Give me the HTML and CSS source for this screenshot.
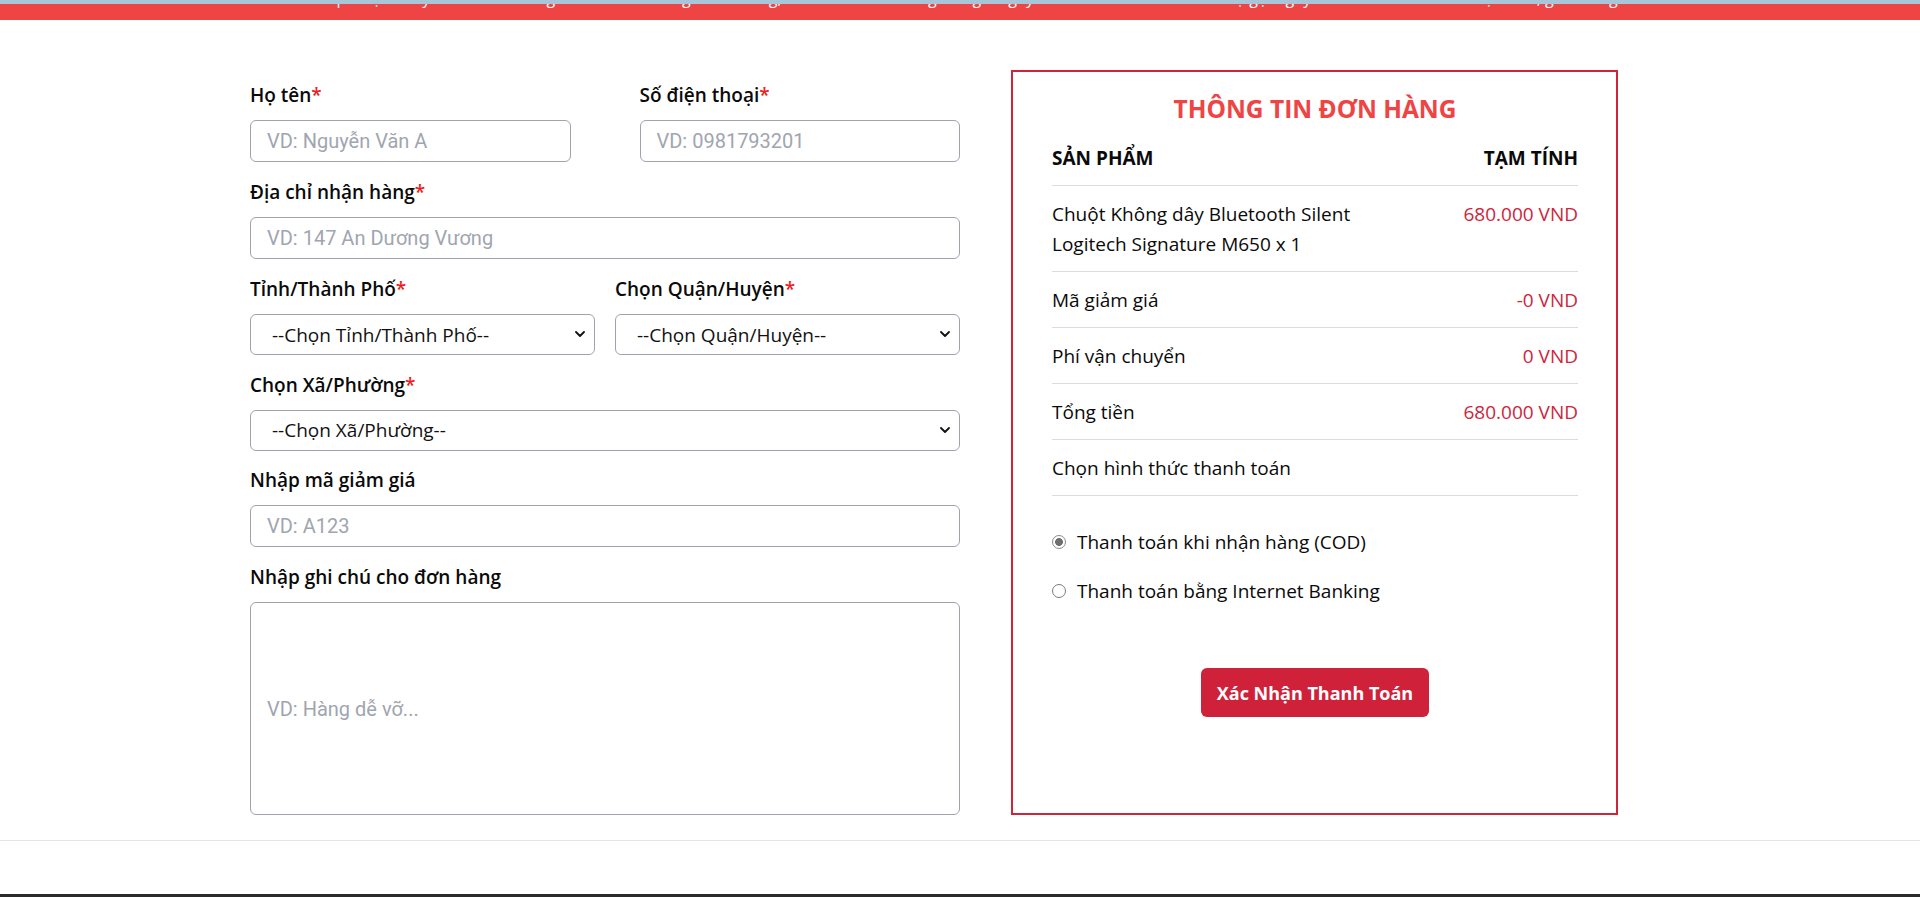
FILE: index.html
```html
<!DOCTYPE html>
<html lang="vi">
<head>
<meta charset="utf-8">
<title>Thanh toán</title>
<link rel="stylesheet" href="styles.css">
</head>
<body>
<div class="topbar">
  <div class="topbar-text">
    <span class="tb-left">Miễn phí vận chuyển cho đơn hàng tiêu chuẩn - Hàng chính hãng, đổi trả nhanh chóng trong 7 ngày</span>
    <span class="tb-right">Hỗ trợ gọi ngay: 0981793201 - Tư vấn tận tình, giao hàng nhanh</span>
  </div>
</div>

<main class="checkout">
  <form class="form-col">
    <div class="row2 row-inputs">
      <div class="group">
        <label class="lbl">Họ tên<span class="req">*</span></label>
        <input class="ctrl" type="text" placeholder="VD: Nguyễn Văn A">
      </div>
      <div class="group">
        <label class="lbl">Số điện thoại<span class="req">*</span></label>
        <input class="ctrl" type="text" placeholder="VD: 0981793201">
      </div>
    </div>
    <div class="group addr">
      <label class="lbl">Địa chỉ nhận hàng<span class="req">*</span></label>
      <input class="ctrl" type="text" placeholder="VD: 147 An Dương Vương">
    </div>
    <div class="row2 row-selects">
      <div class="group">
        <label class="lbl">Tỉnh/Thành Phố<span class="req">*</span></label>
        <div class="sel-wrap">
          <select class="ctrl sel"><option>--Chọn Tỉnh/Thành Phố--</option></select>
          <svg class="chev" viewBox="0 0 10 6" width="10" height="6"><path d="M1 1l4 4 4-4" fill="none" stroke="#111" stroke-width="1.8" stroke-linecap="round" stroke-linejoin="round"/></svg>
        </div>
      </div>
      <div class="group">
        <label class="lbl">Chọn Quận/Huyện<span class="req">*</span></label>
        <div class="sel-wrap">
          <select class="ctrl sel"><option>--Chọn Quận/Huyện--</option></select>
          <svg class="chev" viewBox="0 0 10 6" width="10" height="6"><path d="M1 1l4 4 4-4" fill="none" stroke="#111" stroke-width="1.8" stroke-linecap="round" stroke-linejoin="round"/></svg>
        </div>
      </div>
    </div>
    <div class="group">
      <label class="lbl">Chọn Xã/Phường<span class="req">*</span></label>
      <div class="sel-wrap">
        <select class="ctrl sel"><option>--Chọn Xã/Phường--</option></select>
        <svg class="chev" viewBox="0 0 10 6" width="10" height="6"><path d="M1 1l4 4 4-4" fill="none" stroke="#111" stroke-width="1.8" stroke-linecap="round" stroke-linejoin="round"/></svg>
      </div>
    </div>
    <div class="group">
      <label class="lbl">Nhập mã giảm giá</label>
      <input class="ctrl" type="text" placeholder="VD: A123">
    </div>
    <div class="group last">
      <label class="lbl">Nhập ghi chú cho đơn hàng</label>
      <textarea class="ctrl note" placeholder="VD: Hàng dễ vỡ..."></textarea>
    </div>
  </form>

  <section class="order-card">
    <h2 class="order-title">THÔNG TIN ĐƠN HÀNG</h2>
    <div class="order-table">
      <div class="orow head">
        <span>SẢN PHẨM</span>
        <span>TẠM TÍNH</span>
      </div>
      <div class="orow">
        <span class="pname">Chuột Không dây Bluetooth Silent Logitech Signature M650 x 1</span>
        <span class="price">680.000 VND</span>
      </div>
      <div class="orow">
        <span>Mã giảm giá</span>
        <span class="price">-0 VND</span>
      </div>
      <div class="orow">
        <span>Phí vận chuyển</span>
        <span class="price">0 VND</span>
      </div>
      <div class="orow">
        <span>Tổng tiền</span>
        <span class="price">680.000 VND</span>
      </div>
      <div class="orow">
        <span>Chọn hình thức thanh toán</span>
      </div>
    </div>
    <div class="pay-options">
      <label class="pay"><span class="radio checked"></span>Thanh toán khi nhận hàng (COD)</label>
      <label class="pay"><span class="radio"></span>Thanh toán bằng Internet Banking</label>
    </div>
    <div class="btn-row">
      <button class="btn-pay" type="button">Xác Nhận Thanh Toán</button>
    </div>
  </section>
</main>

<div class="divider"></div>

<footer class="footer">
  <div class="footer-text">LIÊN HỆ VỚI CHÚNG TÔI NGAY BÂY GIỜ</div>
</footer>
</body>
</html>
```

FILE: styles.css
```css
* { box-sizing: border-box; }

html, body {
  margin: 0;
  padding: 0;
  overflow: hidden;
}

body {
  font-family: "Open Sans", "Noto Sans", sans-serif;
  font-size: 19px;
  color: #0a0a0a;
  background: #fff;
  height: 897px;
}

/* top bar */
.topbar {
  border-top: 4px solid #a8c6d9;
  height: 20px;
  background: #ef4444;
  overflow: hidden;
}

.topbar-text {
  display: flex;
  justify-content: space-between;
  margin-top: -16px;
  padding: 0 250px 0 295px;
  font-size: 16px;
  line-height: 20px;
  color: #fff;
  white-space: nowrap;
}

/* main layout */
.checkout {
  display: flex;
  gap: 51px;
  padding: 50px 302px 0 250px;
}

.form-col {
  width: 710px;
  flex: none;
  padding-top: 12px;
}

.row2 {
  display: grid;
  grid-template-columns: 1fr 1fr;
}

.row-inputs { column-gap: 69px; }
.row-selects { column-gap: 20px; }

.group {
  display: flex;
  flex-direction: column;
  margin-bottom: 16.5px;
}

.group.addr { margin-bottom: 17.7px; }

.group.last { margin-bottom: 0; }

.lbl {
  font-weight: 600;
  line-height: 27px;
  margin-bottom: 11px;
}

.req { color: #ef1c1c; }

.ctrl {
  width: 100%;
  height: 42px;
  border: 1px solid #a0a3ad;
  border-radius: 6px;
  background: #fff;
  font-family: Roboto, "Liberation Sans", sans-serif;
  font-size: 20px;
  color: #111;
  padding: 0 16px;
  outline: none;
}

.ctrl::placeholder { color: #a0a5b0; }

.sel-wrap { position: relative; }

.sel {
  appearance: none;
  -webkit-appearance: none;
  font-family: "Open Sans", "Noto Sans", sans-serif;
  font-size: 19px;
  padding-left: 21px;
  height: 41px;
  color: #111;
}

.chev {
  position: absolute;
  right: 10px;
  top: 17px;
  pointer-events: none;
}

.note {
  height: 213px;
  resize: none;
  padding-top: 93px;
  line-height: 27px;
}

/* order card */
.order-card {
  width: 607px;
  flex: none;
  border: 2px solid #d0243b;
  padding: 19px 38px 95px 39px;
}

.order-title {
  margin: 0 0 3px;
  text-align: center;
  color: #ef4444;
  font-size: 24.5px;
  font-weight: 700;
  line-height: 36px;
}

.orow {
  display: flex;
  justify-content: space-between;
  align-items: flex-start;
  gap: 40px;
  padding: 12.5px 0;
  line-height: 30px;
  border-bottom: 1px solid #dcdcdc;
}

.orow.head {
  font-weight: 700;
}

.pname { max-width: 322px; }

.price {
  color: #d0243b;
  white-space: nowrap;
}

.pay-options {
  margin-top: 31px;
  display: flex;
  flex-direction: column;
  gap: 19px;
}

.pay {
  display: flex;
  align-items: center;
  line-height: 30px;
}

.radio {
  width: 14px;
  height: 14px;
  border: 1px solid #7a7a7a;
  border-radius: 50%;
  background: #fff;
  margin-right: 11px;
  flex: none;
}

.radio.checked {
  border-color: #8a8a8a;
  background: radial-gradient(circle, #6e6e6e 0 3.6px, #fff 4.2px);
}

.btn-row {
  display: flex;
  justify-content: center;
  margin-top: 62px;
}

.btn-pay {
  height: 49px;
  padding: 0 15px;
  border: none;
  border-radius: 6px;
  background: #d0213a;
  color: #fff;
  font-family: "Open Sans", "Noto Sans", sans-serif;
  font-size: 18px;
  font-weight: 700;
  width: 228px;
}

.divider {
  margin-top: 25px;
  height: 1px;
  background: #e4e4e4;
}

.footer {
  margin-top: 53px;
  height: 8px;
  background: #2b2b2b;
  overflow: hidden;
  text-align: center;
}

.footer-text {
  color: #ef4444;
  font-size: 22px;
  font-weight: 700;
  line-height: 40px;
  margin-top: 4px;
  padding-left: 260px;
}
```
